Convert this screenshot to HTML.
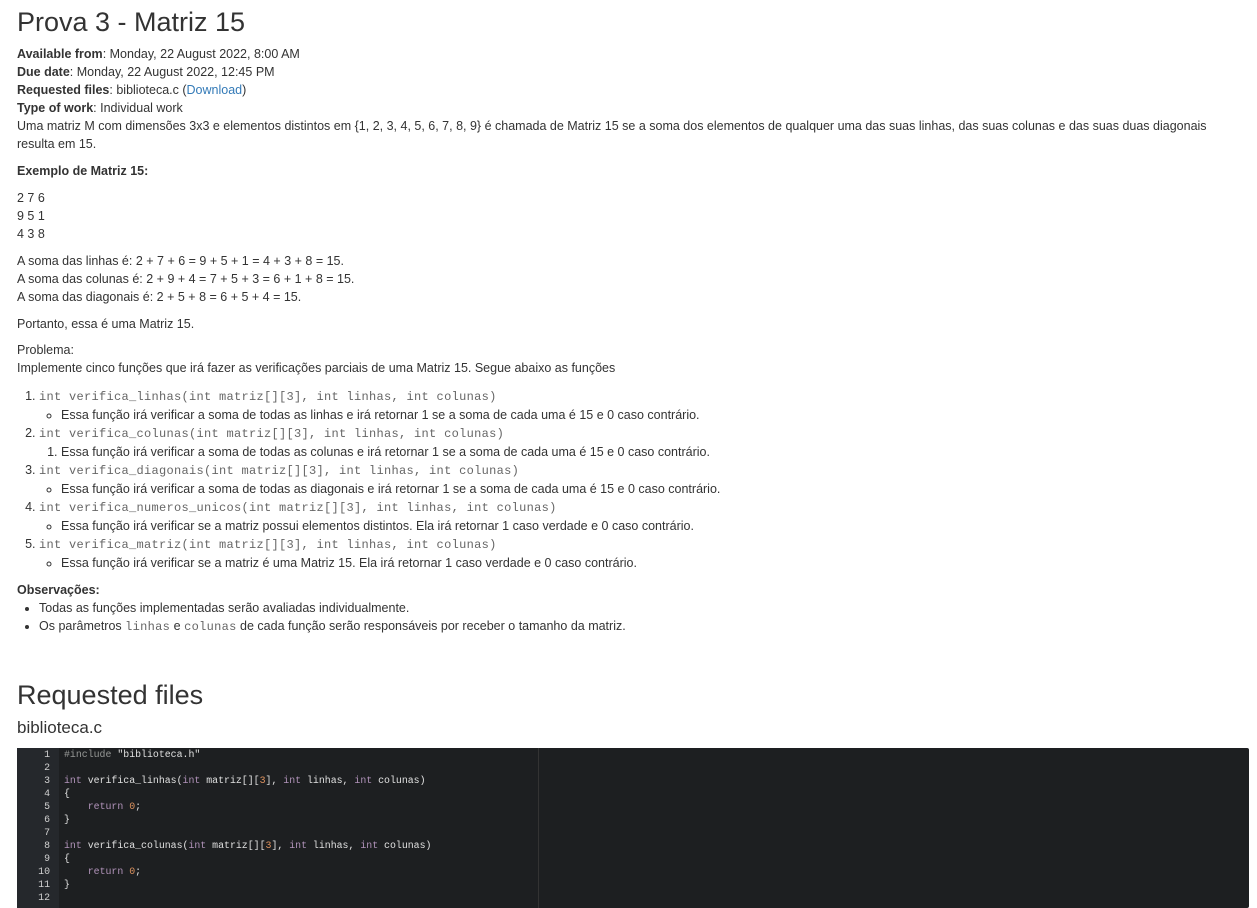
<!DOCTYPE html>
<html><head><meta charset="utf-8"><style>
body{margin:0;background:#fff;color:#333;font-family:"Liberation Sans",Arial,sans-serif;font-size:12.5px;line-height:18px;letter-spacing:0}
.w{position:absolute;left:17px;top:0;width:1210px}
h1{font-size:27px;font-weight:normal;margin:0;position:absolute;top:7px;line-height:30px;letter-spacing:0}
b{color:#333}
a{color:#337ab7;text-decoration:none}
p{margin:0}
code{font-family:"Liberation Mono","Courier New",monospace;font-size:12px;color:#666;letter-spacing:0.3px}
ol,ul{margin:0;padding-left:22px}
ol ul{padding-left:22px;list-style:circle}
ol ol{padding-left:22px}
h2{font-size:27px;font-weight:normal;margin:0;position:absolute;top:680px;line-height:30px;letter-spacing:0}
.fn{position:absolute;top:719px;font-size:17px;letter-spacing:0}
.code{position:absolute;left:17px;top:748px;width:1232px;height:160px;background:#1d1f21;border-radius:2px;font-family:"Liberation Mono",monospace;font-size:9.9px;line-height:13px;color:#e0e0e0;letter-spacing:0}
.g{position:absolute;left:0;top:0;width:42px;height:100%;background:#25282c;color:#d0d0d0;text-align:right}
.g div{padding-right:9px}
.c{position:absolute;left:47px;top:0;white-space:pre}
.k{color:#b294bb}.n{color:#de935f}.s{color:#b5bd68}.p{color:#969896}
.ml{position:absolute;left:521px;top:0;height:100%;border-left:1px solid #333}
</style></head><body>
<div class="w">
<h1>Prova 3 - Matriz 15</h1>
<div style="position:absolute;top:45px;width:1210px">
<p><b>Available from</b>: Monday, 22 August 2022, 8:00 AM</p>
<p><b>Due date</b>: Monday, 22 August 2022, 12:45 PM</p>
<p><b>Requested files</b>: biblioteca.c (<a>Download</a>)</p>
<p><b>Type of work</b>: Individual work</p>
<p>Uma matriz M com dimensões 3x3 e elementos distintos em {1, 2, 3, 4, 5, 6, 7, 8, 9} é chamada de Matriz 15 se a soma dos elementos de qualquer uma das suas linhas, das suas colunas e das suas duas diagonais<br>resulta em 15.</p>
<p style="margin-top:9px"><b>Exemplo de Matriz 15:</b></p>
<p style="margin-top:9px">2 7 6<br>9 5 1<br>4 3 8</p>
<p style="margin-top:9px">A soma das linhas é: 2 + 7 + 6 = 9 + 5 + 1 = 4 + 3 + 8 = 15.<br>A soma das colunas é: 2 + 9 + 4 = 7 + 5 + 3 = 6 + 1 + 8 = 15.<br>A soma das diagonais é: 2 + 5 + 8 = 6 + 5 + 4 = 15.</p>
<p style="margin-top:9px">Portanto, essa é uma Matriz 15.</p>
<p style="margin-top:8px">Problema:<br>Implemente cinco funções que irá fazer as verificações parciais de uma Matriz 15. Segue abaixo as funções</p>
<ol style="margin-top:10px">
<li><code>int verifica_linhas(int matriz[][3], int linhas, int colunas)</code><ul><li>Essa função irá verificar a soma de todas as linhas e irá retornar 1 se a soma de cada uma é 15 e 0 caso contrário.</li></ul></li>
<li><code>int verifica_colunas(int matriz[][3], int linhas, int colunas)</code><ol><li>Essa função irá verificar a soma de todas as colunas e irá retornar 1 se a soma de cada uma é 15 e 0 caso contrário.</li></ol></li>
<li><code>int verifica_diagonais(int matriz[][3], int linhas, int colunas)</code><ul><li>Essa função irá verificar a soma de todas as diagonais e irá retornar 1 se a soma de cada uma é 15 e 0 caso contrário.</li></ul></li>
<li><code>int verifica_numeros_unicos(int matriz[][3], int linhas, int colunas)</code><ul><li>Essa função irá verificar se a matriz possui elementos distintos. Ela irá retornar 1 caso verdade e 0 caso contrário.</li></ul></li>
<li><code>int verifica_matriz(int matriz[][3], int linhas, int colunas)</code><ul><li>Essa função irá verificar se a matriz é uma Matriz 15. Ela irá retornar 1 caso verdade e 0 caso contrário.</li></ul></li>
</ol>
<p style="margin-top:9px"><b>Observações:</b></p>
<ul style="list-style:disc"><li>Todas as funções implementadas serão avaliadas individualmente.</li><li>Os parâmetros <code>linhas</code> e <code>colunas</code> de cada função serão responsáveis por receber o tamanho da matriz.</li></ul>
</div>
<h2>Requested files</h2>
<div class="fn">biblioteca.c</div>
</div>
<div class="code">
<div class="g"><div>1</div><div>2</div><div>3</div><div>4</div><div>5</div><div>6</div><div>7</div><div>8</div><div>9</div><div>10</div><div>11</div><div>12</div></div>
<div class="ml"></div>
<div class="c"><span class="p">#include</span> "biblioteca.h"

<span class="k">int</span> verifica_linhas(<span class="k">int</span> matriz[][<span class="n">3</span>], <span class="k">int</span> linhas, <span class="k">int</span> colunas)
{
    <span class="k">return</span> <span class="n">0</span>;
}

<span class="k">int</span> verifica_colunas(<span class="k">int</span> matriz[][<span class="n">3</span>], <span class="k">int</span> linhas, <span class="k">int</span> colunas)
{
    <span class="k">return</span> <span class="n">0</span>;
}
</div>
</div>
</body></html>
